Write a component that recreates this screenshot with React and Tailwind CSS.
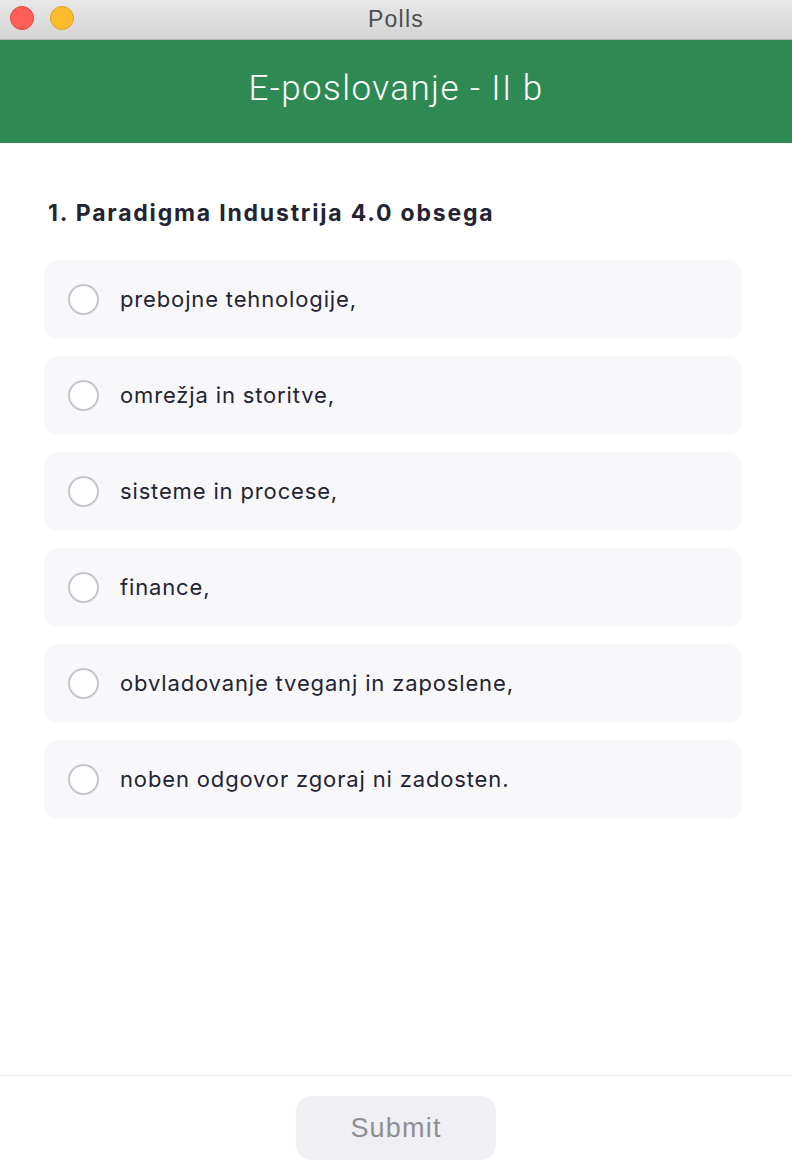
import React from 'react';

const options = [
  'prebojne tehnologije,',
  'omrežja in storitve,',
  'sisteme in procese,',
  'finance,',
  'obvladovanje tveganj in zaposlene,',
  'noben odgovor zgoraj ni zadosten.',
];

export default function App() {
  return (
    <div className="flex h-[1174px] w-[792px] flex-col overflow-hidden bg-white">
      {/* window title bar */}
      <div className="relative flex h-[40px] shrink-0 items-center justify-center border-b border-[#b9b9b9] bg-gradient-to-b from-[#e8e8e8] to-[#d4d4d4]">
        <div className="absolute left-[10px] top-[6px] flex gap-[16px]">
          <span className="h-[24px] w-[24px] rounded-full border border-[#e0443e] bg-[#ff5f57]" />
          <span className="h-[24px] w-[24px] rounded-full border border-[#dea123] bg-[#ffbd2e]" />
        </div>
        <span className="font-['Liberation_Sans',sans-serif] text-[23px] tracking-[1.2px] text-[#4d4d4d]">Polls</span>
      </div>

      {/* header */}
      <div className="flex h-[103px] shrink-0 items-center justify-center bg-[#2e8a52] pb-[4px]">
        <h1 className="font-['Roboto',sans-serif] text-[35px] font-light tracking-[1.4px] text-white">E-poslovanje - II b</h1>
      </div>

      {/* question */}
      <div className="flex-1 pl-[44px] pr-[50px] pt-[56px] font-['Inter',sans-serif]">
        <h2 className="pl-[4px] text-[23px] font-bold leading-[28px] tracking-[1.8px] text-[#232333]">1. Paradigma Industrija 4.0 obsega</h2>
        <div className="mt-[33px] flex flex-col gap-[17px]">
          {options.map((opt) => (
            <label key={opt} className="flex h-[79px] items-center gap-[21px] rounded-[14px] bg-[#f8f8fa] pl-[24px]">
              <span className="h-[31px] w-[31px] shrink-0 rounded-full border-2 border-[#c6c5d1] bg-white" />
              <span className="text-[22px] tracking-[0.85px] text-[#232333]">{opt}</span>
            </label>
          ))}
        </div>
      </div>

      {/* footer */}
      <div className="flex h-[99px] shrink-0 justify-center border-t border-[#ededf0] pt-[20px]">
        <button className="h-[64px] w-[200px] rounded-[16px] bg-[#efeff4] font-['Liberation_Sans',sans-serif] text-[27px] tracking-[1.2px] text-[#8e8e93]">
          Submit
        </button>
      </div>
    </div>
  );
}
